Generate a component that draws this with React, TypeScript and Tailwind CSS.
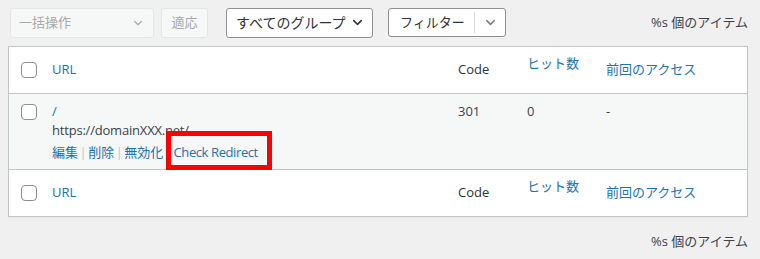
import { ChevronDown } from 'lucide-react'

const font = { fontFamily: '"Segoe UI", "Open Sans", "Noto Sans CJK JP", sans-serif' }

function Checkbox() {
  return <div className="w-4 h-4 rounded-[4px] border border-[#8c8f94] bg-white" />
}

function HeadRow({ top }: { top?: boolean }) {
  return (
    <div
      className={
        'flex items-center h-[47px] bg-white ' +
        (top ? 'border-b border-[#c3c4c7]' : 'border-t border-[#c3c4c7]')
      }
    >
      <div className="w-[43px] pl-[12px] flex items-center">
        <Checkbox />
      </div>
      <div className="w-[406px] text-[#2271b1]">URL</div>
      <div className="w-[69px] text-[#2c3338]">Code</div>
      <div className="w-[79px] text-[#2271b1] self-start pt-[7px]">ヒット数</div>
      <div className="text-[#2271b1]">前回のアクセス</div>
    </div>
  )
}

export default function App() {
  return (
    <div className="w-[760px] h-[259px] bg-[#f0f0f1] text-[13px] text-[#3c434a]" style={font}>
      <div className="flex items-center h-[46px] pl-[10px] pr-[12px] pb-[1px]">
        <div className="w-[144px] h-[30px] flex items-center justify-between pl-[8px] pr-[8px] border border-[#e4e5e7] bg-[#f6f7f7] rounded-[3px] text-[#a7aaad]">
          <span>一括操作</span>
          <ChevronDown size={14} strokeWidth={2} />
        </div>
        <div className="ml-[7px] w-[47px] h-[30px] flex items-center justify-center border border-[#e4e5e7] bg-[#f6f7f7] rounded-[3px] text-[#a7aaad]">
          適応
        </div>
        <div className="ml-[18px] w-[147px] h-[30px] flex items-center justify-between pl-[9px] pr-[7px] border border-[#8c8f94] bg-white rounded-[3px] text-[#2c3338] text-[14px]">
          <span>すべてのグループ</span>
          <ChevronDown size={15} strokeWidth={2.4} />
        </div>
        <div className="ml-[15px] w-[118px] h-[29px] flex items-center border border-[#8c8f94] bg-white rounded-[3px] text-[#2c3338]">
          <span className="w-[85px] pl-[11px]">フィルター</span>
          <div className="h-[21px] border-l border-[#dcdcde]" />
          <div className="flex-1 flex justify-center text-[#787c82]">
            <ChevronDown size={15} strokeWidth={2.4} />
          </div>
        </div>
        <div className="ml-auto">%s 個のアイテム</div>
      </div>

      <div className="ml-[8px] w-[740px] border border-[#c3c4c7] bg-white shadow-[0_1px_1px_rgba(0,0,0,0.04)]">
        <HeadRow top />
        <div className="flex h-[75px] bg-[#f6f7f7]">
          <div className="w-[43px] pl-[12px] pt-[10px]">
            <Checkbox />
          </div>
          <div className="w-[406px] pt-[8px] leading-[19px]">
            <div className="text-[#2271b1]">/</div>
            <div className="text-[#3c434a] tracking-[-0.2px]">https://domainXXX.net/</div>
            <div className="flex items-center mt-[3px] text-[#2271b1]">
              <span>編集</span>
              <span className="mx-[1.5px] text-[#c3c4c7]">|</span>
              <span>削除</span>
              <span className="mx-[1.5px] text-[#c3c4c7]">|</span>
              <span>無効化</span>
              <span className="ml-[2px] mr-[1px] text-[#c3c4c7]">|</span>
              <span className="relative tracking-[-0.4px]">
                Check Redirect
                <span className="absolute left-[-8px] top-[-12px] w-[106px] h-[39px] border-[5px] border-[#ff0000]" />
              </span>
            </div>
          </div>
          <div className="w-[69px] pt-[8px] leading-[19px]">301</div>
          <div className="w-[79px] pt-[8px] leading-[19px]">0</div>
          <div className="pt-[8px] leading-[19px]">-</div>
        </div>
        <HeadRow />
      </div>

      <div className="flex justify-end pr-[12px] pt-[15px]">%s 個のアイテム</div>
    </div>
  )
}
